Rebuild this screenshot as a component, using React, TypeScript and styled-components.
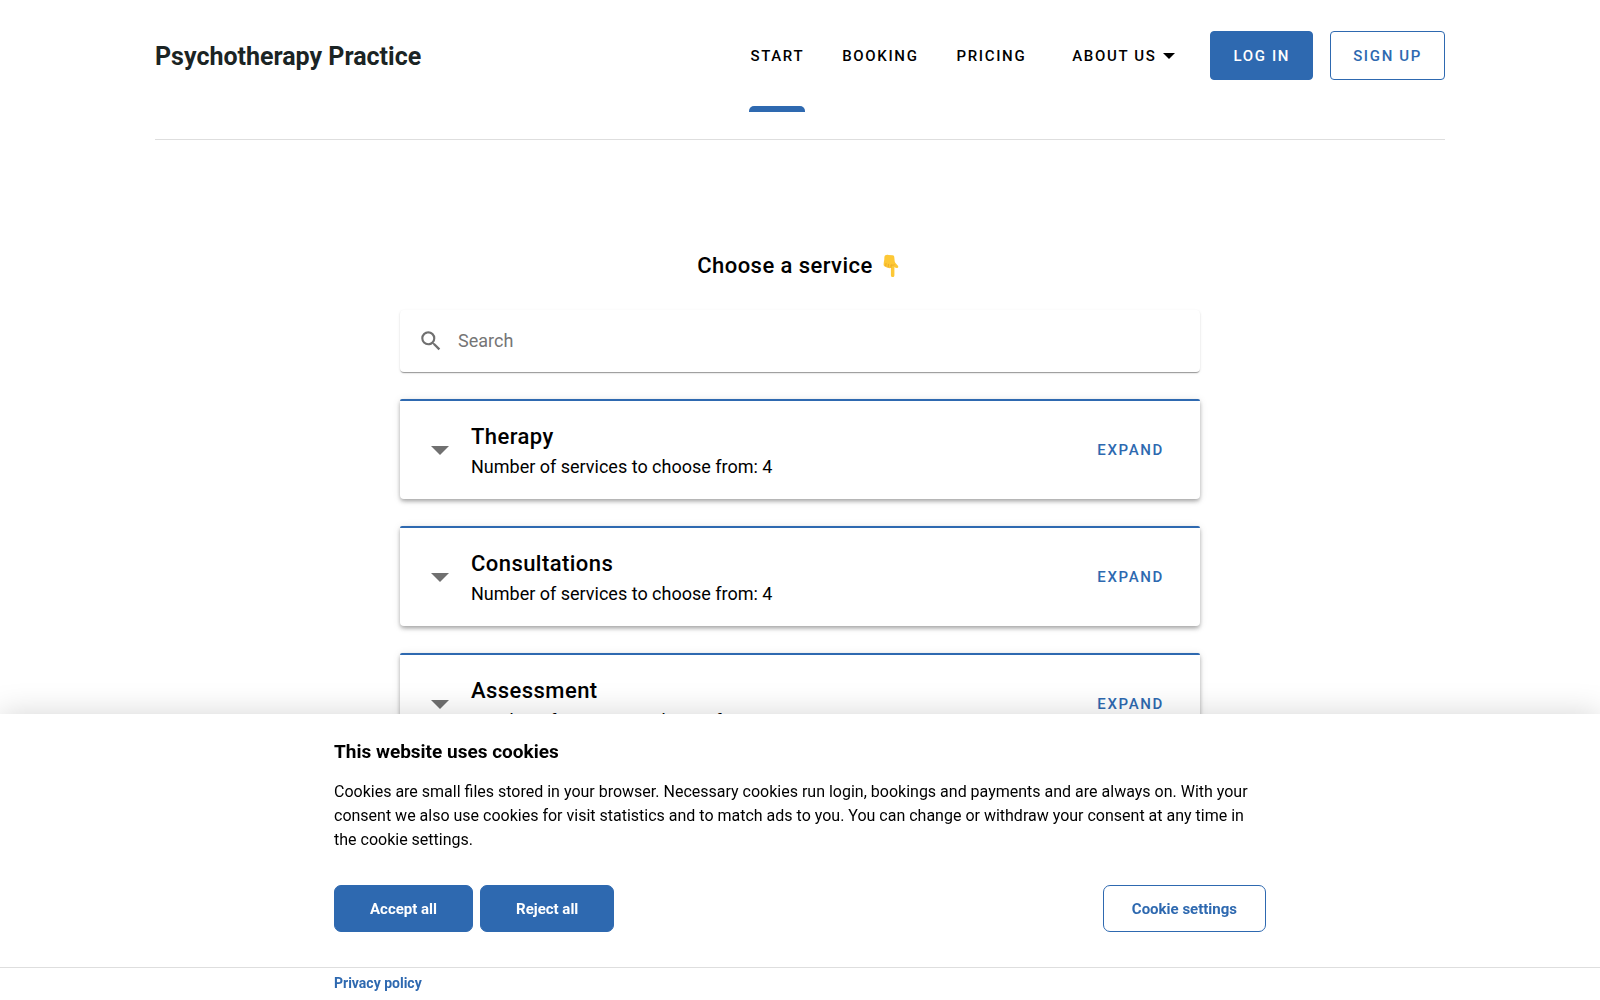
import React from "react";
import styled, { createGlobalStyle, css } from "styled-components";

const blue = "#2e69b0";

const GlobalStyle = createGlobalStyle`
  *, *::before, *::after { box-sizing: border-box; }
  body {
    margin: 0;
    background: #fff;
    color: #000;
    font-family: Roboto, "Liberation Sans", sans-serif;
    font-size: 16px;
  }
  h1, h2, h3, p { margin: 0; }
  button, input { font-family: inherit; }
`;

const Header = styled.header`
  display: flex;
  align-items: flex-start;
  justify-content: space-between;
  max-width: 1290px;
  margin: 0 auto;
  height: 140px;
  border-bottom: 1px solid #dedede;
`;

const Brand = styled.a`
  line-height: 113px;
  font-size: 25px;
  font-weight: 700;
  color: #1b2424;
  text-decoration: none;
  white-space: nowrap;
`;

const Nav = styled.nav`
  display: flex;
  align-items: center;
  height: 111px;
`;

const Links = styled.ul`
  display: flex;
  gap: 36px;
  margin: 0 34px 0 0;
  padding: 0;
  list-style: none;
`;

const caps = css`
  font-size: 15px;
  font-weight: 500;
  letter-spacing: 0.11em;
  text-transform: uppercase;
  white-space: nowrap;
`;

const NavLink = styled.a<{ $active?: boolean }>`
  ${caps}
  display: block;
  height: 112px;
  padding: 0 1px;
  line-height: 112px;
  color: #000;
  text-decoration: none;
  ${({ $active }) =>
    $active &&
    css`
      &::after {
        content: "";
        display: block;
        height: 6px;
        margin: -6px -1px 0;
        border-radius: 5px 5px 0 0;
        background: ${blue};
      }
    `}
`;

const MenuButton = styled.button`
  ${caps}
  display: flex;
  align-items: center;
  gap: 7px;
  height: 112px;
  margin-left: 8px;
  padding: 0 1px;
  border: 0;
  background: none;
  color: #000;
`;

const NavButton = styled.button<{ $filled?: boolean }>`
  ${caps}
  height: 49px;
  padding: 0 22px;
  border: 1px solid ${blue};
  border-radius: 4px;
  background: ${({ $filled }) => ($filled ? blue : "#fff")};
  color: ${({ $filled }) => ($filled ? "#fff" : blue)};
  & + & { margin-left: 17px; }
`;

const Main = styled.main`
  display: flex;
  flex-direction: column;
  gap: 27px;
  max-width: 800px;
  margin: 0 auto;
  padding: 109px 0 27px;
`;

const Title = styled.h1`
  display: flex;
  align-items: center;
  justify-content: center;
  gap: 8px;
  line-height: 34px;
  font-size: 22px;
  font-weight: 500;
  letter-spacing: 0.02em;
`;

const Search = styled.label`
  display: flex;
  align-items: center;
  gap: 14px;
  height: 62px;
  padding: 0 18px;
  border-radius: 4px;
  background: #fff;
  color: #707070;
  box-shadow: 0 2px 1px -1px rgba(0, 0, 0, 0.24), 0 1px 1px rgba(0, 0, 0, 0.16), 0 1px 3px rgba(0, 0, 0, 0.1);
`;

const SearchInput = styled.input`
  flex: 1;
  min-width: 0;
  padding: 0;
  border: 0;
  outline: 0;
  background: none;
  font-size: 18px;
  line-height: 24px;
  &::placeholder { color: #757575; opacity: 1; }
`;

const Card = styled.section`
  display: flex;
  align-items: center;
  height: 100px;
  padding: 0 36px 0 31px;
  border-top: 2px solid ${blue};
  border-radius: 2px 2px 4px 4px;
  background: #fff;
  box-shadow: 0 2px 4px -1px rgba(0, 0, 0, 0.24), 0 3px 4px rgba(0, 0, 0, 0.14), 0 1px 8px rgba(0, 0, 0, 0.1);
`;

const CardText = styled.div`
  flex: 1;
  padding-top: 2px;
  margin-left: 22px;
`;

const CardTitle = styled.h2`
  font-size: 22px;
  line-height: 32px;
  font-weight: 500;
  letter-spacing: 0.02em;
`;

const CardNote = styled.p`
  font-size: 18px;
  line-height: 28px;
`;

const Expand = styled.button`
  ${caps}
  padding: 0;
  border: 0;
  background: none;
  color: ${blue};
`;

const Banner = styled.aside`
  position: fixed;
  inset: auto 0 0;
  background: #fff;
  box-shadow: 0 0 30px rgba(0, 0, 0, 0.17);
`;

const BannerInner = styled.div`
  max-width: 932px;
  margin: 0 auto;
`;

const BannerTitle = styled.h2`
  padding-top: 24px;
  font-size: 19px;
  line-height: 28px;
  font-weight: 700;
`;

const BannerText = styled.p`
  margin-top: 14px;
  font-size: 16px;
  line-height: 24px;
`;

const Actions = styled.div`
  display: flex;
  gap: 7px;
  padding: 33px 0 35px;
`;

const ActionButton = styled.button<{ $outline?: boolean }>`
  height: 47px;
  padding: 0 ${({ $outline }) => ($outline ? 28 : 35)}px;
  border: 1px solid ${blue};
  border-radius: 7px;
  background: ${({ $outline }) => ($outline ? "#fff" : blue)};
  color: ${({ $outline }) => ($outline ? blue : "#fff")};
  font-size: 15px;
  font-weight: 700;
  white-space: nowrap;
  margin-left: ${({ $outline }) => ($outline ? "auto" : 0)};
`;

const BannerFoot = styled.footer`
  border-top: 1px solid #dedede;
`;

const PolicyLink = styled.a`
  display: block;
  padding-bottom: 1px;
  font-size: 14px;
  line-height: 31px;
  font-weight: 700;
  color: ${blue};
  text-decoration: none;
`;

const PointDown = () => (
  <svg width="22" height="24" viewBox="0 0 22 24" aria-hidden="true">
    <path d="M4 1.600C5 .8 6 .8 7.500.9l4 .4c1.300.1 1.700.8 1.800 1.900l.4 4c.1.900.6 1.500 1.200 2.200l2 2.300c.8 1 .3 2.200-.8 2.300-1 .1-1.900-.3-2.700-.9v8.100c0 1.200-.7 1.900-1.700 1.900s-1.800-.7-1.800-1.900v-7.400c-.9.6-2.100.6-2.800-.2-1 .3-2.100-.1-2.400-1-1.300 0-2.200-.8-2.100-2.100.1-1.700.3-3.300.7-4.900.1-1.600-.1-3.100.7-4z" fill="#fdc836" />
    <path d="M4.700 12.300 5 9.500M7.200 13.300l.2-3M10 13.400v-2.600c1.200.6 2.300.5 3.200.1" fill="none" stroke="#e8a525" strokeWidth="0.8" strokeLinecap="round" />
  </svg>
);

const services = ["Therapy", "Consultations", "Assessment"];

export default function App() {
  return (
    <>
      <GlobalStyle />
      <Header>
        <Brand href="#">Psychotherapy Practice</Brand>
        <Nav>
          <Links>
            <li><NavLink href="#start" $active>Start</NavLink></li>
            <li><NavLink href="#booking">Booking</NavLink></li>
            <li><NavLink href="#pricing">Pricing</NavLink></li>
            <li>
              <MenuButton type="button">
                About us
                <svg width="12" height="6" viewBox="0 0 12 6" aria-hidden="true"><path d="M0 0h12L6 6z" fill="#000" /></svg>
              </MenuButton>
            </li>
          </Links>
          <NavButton type="button" $filled>Log in</NavButton>
          <NavButton type="button">Sign up</NavButton>
        </Nav>
      </Header>
      <Main>
        <Title>Choose a service <PointDown /></Title>
        <Search>
          <svg width="26" height="26" viewBox="0 0 24 24" aria-hidden="true">
            <path fill="currentColor" d="M15.500 14h-.79l-.28-.27A6.471 6.471 0 0 0 16 9.500 6.500 6.500 0 1 0 9.500 16c1.610 0 3.090-.59 4.230-1.570l.27.28v.79l5 4.990L20.490 19l-4.990-5zm-6 0C7.010 14 5 11.990 5 9.500S7.010 5 9.500 5 14 7.010 14 9.500 11.990 14 9.500 14z" />
          </svg>
          <SearchInput type="search" placeholder="Search" aria-label="Search" />
        </Search>
        {services.map((name) => (
          <Card key={name}>
            <svg width="18" height="9" viewBox="0 0 18 9" aria-hidden="true"><path d="M0 0h18L9 9z" fill="#707070" /></svg>
            <CardText>
              <CardTitle>{name}</CardTitle>
              <CardNote>Number of services to choose from: 4</CardNote>
            </CardText>
            <Expand type="button">Expand</Expand>
          </Card>
        ))}
      </Main>
      <Banner aria-label="Cookies">
        <BannerInner>
          <BannerTitle>This website uses cookies</BannerTitle>
          <BannerText>
            Cookies are small files stored in your browser. Necessary cookies run login, bookings and payments and are always on. With your consent we also use cookies for visit statistics and to match ads to you. You can change or withdraw your consent at any time in the cookie settings.
          </BannerText>
          <Actions>
            <ActionButton type="button">Accept all</ActionButton>
            <ActionButton type="button">Reject all</ActionButton>
            <ActionButton type="button" $outline>Cookie settings</ActionButton>
          </Actions>
        </BannerInner>
        <BannerFoot>
          <BannerInner>
            <PolicyLink href="#privacy">Privacy policy</PolicyLink>
          </BannerInner>
        </BannerFoot>
      </Banner>
    </>
  );
}
